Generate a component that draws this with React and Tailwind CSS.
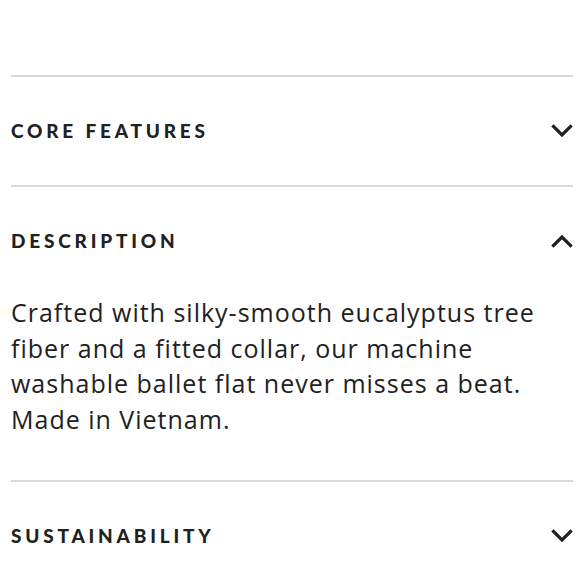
import React from "react";

function Chevron({ up }) {
  return (
    <svg width="22" height="14" viewBox="0 0 22 14" fill="none" className="shrink-0">
      <path
        d={up ? "M2.5 11.5 L11 3 L19.5 11.5" : "M2.5 2.5 L11 11 L19.5 2.5"}
        stroke="#212121"
        strokeWidth="3.2"
        strokeLinecap="square"
      />
    </svg>
  );
}

function Row({ title, up }) {
  return (
    <div className="flex h-[108px] items-center justify-between">
      <span
        className="text-[19px] font-black tracking-[3.8px] text-[#212121]"
        style={{ fontFamily: "Lato, sans-serif" }}
      >
        {title}
      </span>
      <Chevron up={up} />
    </div>
  );
}

export default function App() {
  return (
    <div
      className="w-[580px] h-[580px] overflow-hidden bg-white pt-[75px] pl-[11px] pr-[7px]"
      style={{ fontFamily: "'Open Sans', 'Noto Sans', sans-serif" }}
    >
      <div className="border-t-2 border-[#d9d9d9]">
        <Row title="CORE FEATURES" />
      </div>
      <div className="border-t-2 border-[#d9d9d9]">
        <Row title="DESCRIPTION" up />
        <p className="text-[25px] leading-[35.5px] tracking-[1px] text-[#212121] pb-[43px] whitespace-nowrap">
          Crafted with silky-smooth eucalyptus tree
          <br />
          fiber and a fitted collar, our machine
          <br />
          washable ballet flat never misses a beat.
          <br />
          Made in Vietnam.
        </p>
      </div>
      <div className="border-t-2 border-[#d9d9d9]">
        <Row title="SUSTAINABILITY" />
      </div>
    </div>
  );
}
